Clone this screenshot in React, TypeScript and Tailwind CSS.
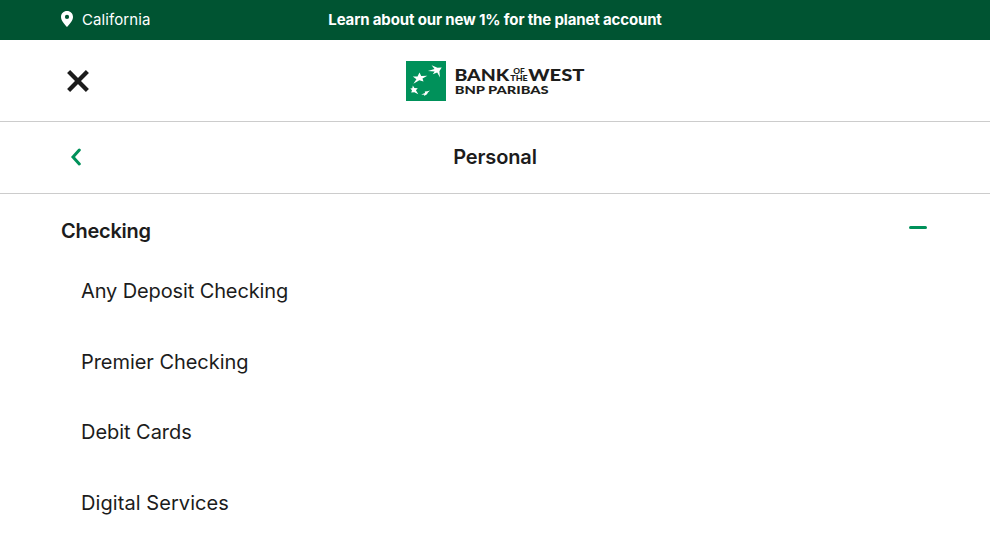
const links = [
  { label: 'Any Deposit Checking', spacing: 'tracking-[-0.12px]' },
  { label: 'Premier Checking', spacing: 'tracking-[-0.05px]' },
  { label: 'Debit Cards', spacing: 'tracking-[-0.04px]' },
  { label: 'Digital Services', spacing: 'tracking-[0.07px]' },
];

function Logo() {
  return (
    <svg width="179" height="40" viewBox="0 0 179 40" role="img" aria-label="Bank of the West">
      <rect width="40" height="40" fill="#00915a" />
      <g fill="#fff">
        <path d="M35.700 6.600 31.500 6.700 25.600 4.200 28.500 7.900 21.900 10.100 28.600 10.500 26.800 13.200 31.200 11.600 34 16.500 33.400 10.300Z" />
        <path d="M6.800 15.400 11.500 15.500 13.500 11.400 15.200 15 21.300 14.700 16.500 17.600 17.500 20.600 13.300 19.200 7.400 22.800 10.400 18.300Z" />
        <path d="M6.800 24.500 8.400 27 11.800 27.200 9.900 29.300 12.300 33.200 8.400 31.300 5.200 31.600 6 29.200 4.300 27.500 6.300 27.300Z" />
        <path d="M24 29.400 21.300 30.300 18.800 30.500 19 32 15.200 33.400 18.300 33.700 18.100 35 21 33.300 21.900 31.400Z" />
      </g>
      <g fill="#1d1d1b" fontFamily="Lato, 'Liberation Sans', sans-serif" fontWeight="900">
        <text x="48.400" y="20" fontSize="17.700" textLength="54.800" lengthAdjust="spacingAndGlyphs">BANK</text>
        <g fontWeight="900">
          <text x="107.200" y="13" fontSize="7.400" textLength="11.500" lengthAdjust="spacingAndGlyphs">OF</text>
          <text x="104.200" y="20" fontSize="7.400" textLength="17.600" lengthAdjust="spacingAndGlyphs">THE</text>
        </g>
        <text x="122.200" y="20" fontSize="17.700" textLength="56.300" lengthAdjust="spacingAndGlyphs">WEST</text>
        <text x="48.700" y="33" fontSize="11.900" textLength="94" lengthAdjust="spacingAndGlyphs">BNP PARIBAS</text>
      </g>
    </svg>
  );
}

export default function App() {
  return (
    <div className="h-[558px] w-full overflow-hidden bg-white font-['Inter',sans-serif] text-[#1c1c1c]">
      <div className="grid h-10 grid-cols-[1fr_auto_1fr] items-center bg-[#005432] px-[61px] text-[15px] leading-5 text-white">
        <div className="flex items-center">
          <svg className="-ml-[0.5px] -mt-[3px] mr-[9.5px]" width="12" height="16" viewBox="0 0 12 16" fill="currentColor">
            <path fillRule="evenodd" d="M6 0C2.600 0 0 2.600 0 5.900 0 9.400 3.500 13.200 6 16c2.500-2.800 6-6.600 6-10.100C12 2.600 9.400 0 6 0Zm0 3.800a2.100 2.100 0 1 1 0 4.200 2.100 2.100 0 0 1 0-4.200Z" />
          </svg>
          <span className="tracking-[0.1px]">California</span>
        </div>
        <span className="font-bold tracking-[-0.15px]">Learn about our new 1% for the planet account</span>
      </div>
      <header className="grid h-[82px] grid-cols-[1fr_auto_1fr] items-center border-b border-[#cccccc] px-[61px]">
        <button className="ml-[6px] flex w-fit" aria-label="Close">
          <svg width="22" height="22" viewBox="0 0 22 22" fill="none" stroke="#1c1c1c" strokeWidth="4.300">
            <path d="m1.600 1.600 18.800 18.800m0-18.800L1.600 20.400" />
          </svg>
        </button>
        <Logo />
      </header>
      <div className="grid h-[72px] grid-cols-[1fr_auto_1fr] items-center border-b border-[#cccccc] px-[61px]">
        <button className="-mt-px ml-[9px] flex w-fit" aria-label="Back">
          <svg width="12" height="18" viewBox="0 0 12 18" fill="none" stroke="#00915a" strokeWidth="3">
            <path d="M9.300 2 3 9l6.300 7" strokeLinecap="round" />
          </svg>
        </button>
        <h1 className="-mt-px text-xl font-semibold leading-6 tracking-[-0.12px]">Personal</h1>
      </div>
      <div className="flex items-center justify-between px-[61px] pt-[25px]">
        <h2 className="text-xl font-semibold leading-6 tracking-[-0.25px]">Checking</h2>
        <span className="mb-[8px] mr-[2px] h-[3px] w-[18px] rounded-full bg-[#00915a]" />
      </div>
      <nav className="flex flex-col gap-[46.600px] pl-[81px] pt-9">
        {links.map((link) => (
          <a key={link.label} className={`text-xl leading-6 ${link.spacing}`}>{link.label}</a>
        ))}
      </nav>
    </div>
  );
}
